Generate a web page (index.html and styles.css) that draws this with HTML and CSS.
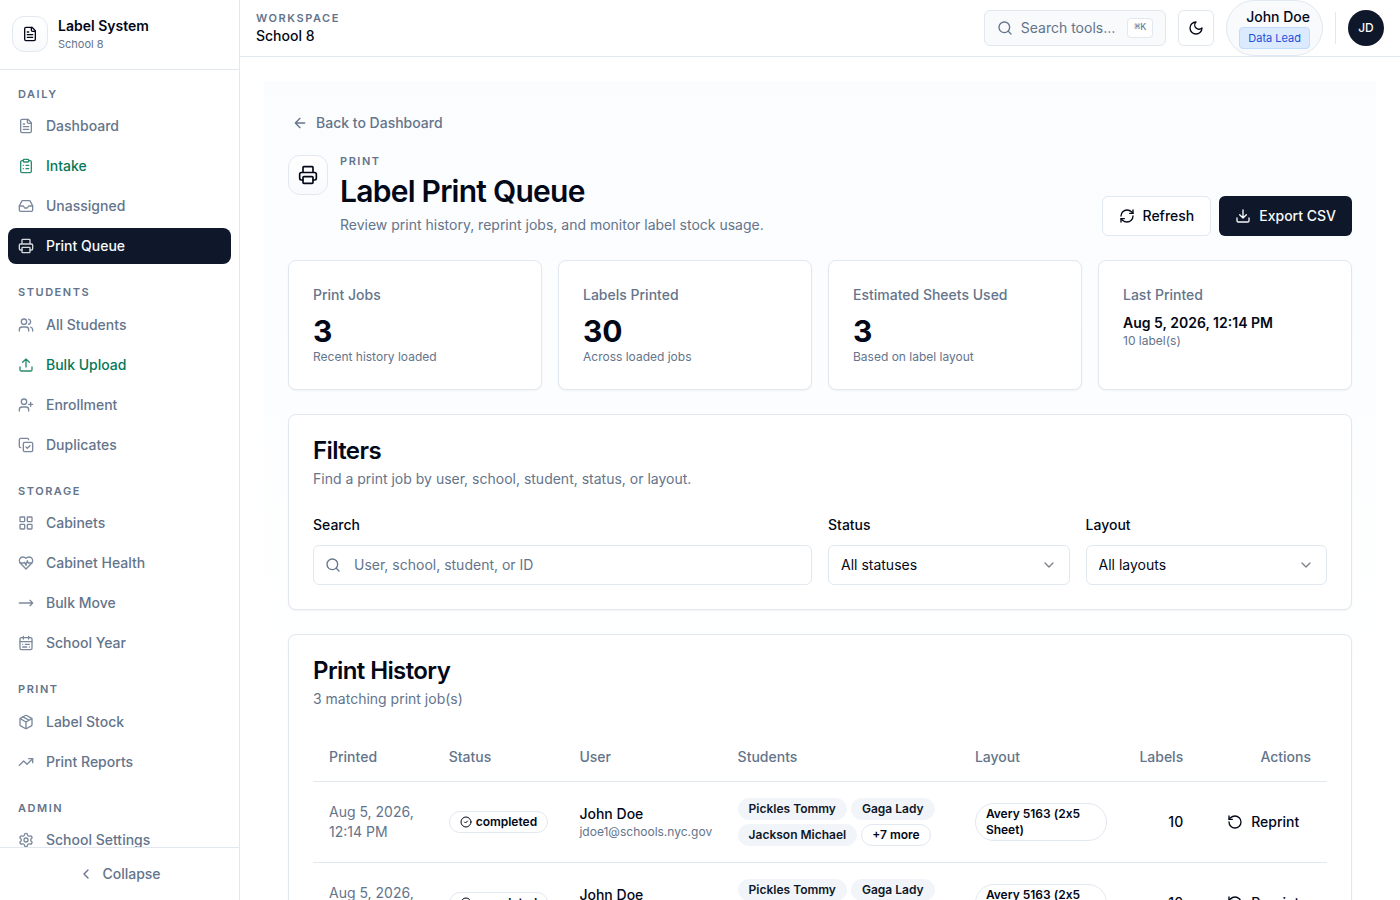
FILE: index.html
```html
<!DOCTYPE html>
<html lang="en">
<head>
<meta charset="utf-8">
<meta name="viewport" content="width=device-width, initial-scale=1">
<title>Label Print Queue</title>
<link rel="stylesheet" href="styles.css">
</head>
<body>
<svg class="sprite" aria-hidden="true">
  <symbol id="i-file" viewBox="0 0 24 24"><path d="M15 2H6a2 2 0 0 0-2 2v16a2 2 0 0 0 2 2h12a2 2 0 0 0 2-2V7Z"/><path d="M14 2v4a2 2 0 0 0 2 2h4M10 9H8M16 13H8M16 17H8"/></symbol>
  <symbol id="i-clipboard" viewBox="0 0 24 24"><rect width="8" height="4" x="8" y="2" rx="1"/><path d="M16 4h2a2 2 0 0 1 2 2v14a2 2 0 0 1-2 2H6a2 2 0 0 1-2-2V6a2 2 0 0 1 2-2h2M12 11h4M12 16h4M8 11h.01M8 16h.01"/></symbol>
  <symbol id="i-inbox" viewBox="0 0 24 24"><path d="M22 12h-6l-2 3h-4l-2-3H2"/><path d="M5.45 5.11 2 12v6a2 2 0 0 0 2 2h16a2 2 0 0 0 2-2v-6l-3.45-6.89A2 2 0 0 0 16.76 4H7.24a2 2 0 0 0-1.79 1.11z"/></symbol>
  <symbol id="i-printer" viewBox="0 0 24 24"><path d="M6 18H4a2 2 0 0 1-2-2v-5a2 2 0 0 1 2-2h16a2 2 0 0 1 2 2v5a2 2 0 0 1-2 2h-2M6 9V3a1 1 0 0 1 1-1h10a1 1 0 0 1 1 1v6"/><rect x="6" y="14" width="12" height="8" rx="1"/></symbol>
  <symbol id="i-users" viewBox="0 0 24 24"><path d="M16 21v-2a4 4 0 0 0-4-4H6a4 4 0 0 0-4 4v2"/><circle cx="9" cy="7" r="4"/><path d="M22 21v-2a4 4 0 0 0-3-3.87M16 3.13a4 4 0 0 1 0 7.75"/></symbol>
  <symbol id="i-upload" viewBox="0 0 24 24"><path d="M12 3v12M17 8l-5-5-5 5M21 15v4a2 2 0 0 1-2 2H5a2 2 0 0 1-2-2v-4"/></symbol>
  <symbol id="i-user-plus" viewBox="0 0 24 24"><path d="M16 21v-2a4 4 0 0 0-4-4H6a4 4 0 0 0-4 4v2"/><circle cx="9" cy="7" r="4"/><path d="M19 8v6M22 11h-6"/></symbol>
  <symbol id="i-copy-check" viewBox="0 0 24 24"><path d="m12 15 2 2 4-4"/><rect width="14" height="14" x="8" y="8" rx="2"/><path d="M4 16c-1.1 0-2-.9-2-2V4c0-1.1.9-2 2-2h10c1.1 0 2 .9 2 2"/></symbol>
  <symbol id="i-grid" viewBox="0 0 24 24"><rect width="7" height="7" x="3" y="3" rx="1"/><rect width="7" height="7" x="14" y="3" rx="1"/><rect width="7" height="7" x="14" y="14" rx="1"/><rect width="7" height="7" x="3" y="14" rx="1"/></symbol>
  <symbol id="i-heart" viewBox="0 0 24 24"><path d="M19 14c1.49-1.46 3-3.21 3-5.5A5.5 5.5 0 0 0 16.5 3c-1.76 0-3 .5-4.5 2-1.5-1.5-2.74-2-4.5-2A5.5 5.5 0 0 0 2 8.500c0 2.300 1.500 4.050 3 5.500l7 7Z"/><path d="M3.220 12H9.500l.5-1 2 4.500 2-7 1.500 3.500h5.270"/></symbol>
  <symbol id="i-move-right" viewBox="0 0 24 24"><path d="m18 8 4 4-4 4M2 12h20"/></symbol>
  <symbol id="i-calendar" viewBox="0 0 24 24"><rect width="18" height="18" x="3" y="4" rx="2"/><path d="M16 2v4M3 10h18M8 2v4M17 14h-6M13 18H7M7 14h.01M17 18h.01"/></symbol>
  <symbol id="i-package" viewBox="0 0 24 24"><path d="M11 21.730a2 2 0 0 0 2 0l7-4A2 2 0 0 0 21 16V8a2 2 0 0 0-1-1.730l-7-4a2 2 0 0 0-2 0l-7 4A2 2 0 0 0 3 8v8a2 2 0 0 0 1 1.730zM12 22V12"/><path d="M3.290 7 12 12l8.710-5M7.500 4.270l9 5.150"/></symbol>
  <symbol id="i-trend" viewBox="0 0 24 24"><path d="M22 7l-8.500 8.500-5-5L2 17"/><path d="M16 7h6v6"/></symbol>
  <symbol id="i-settings" viewBox="0 0 24 24"><path d="M9.671 4.136a2.340 2.340 0 0 1 4.659 0 2.340 2.340 0 0 0 3.319 1.915 2.340 2.340 0 0 1 2.330 4.033 2.340 2.340 0 0 0 0 3.831 2.340 2.340 0 0 1-2.330 4.033 2.340 2.340 0 0 0-3.319 1.915 2.340 2.340 0 0 1-4.659 0 2.340 2.340 0 0 0-3.320-1.915 2.340 2.340 0 0 1-2.330-4.033 2.340 2.340 0 0 0 0-3.831A2.340 2.340 0 0 1 6.350 6.051a2.340 2.340 0 0 0 3.319-1.915"/><circle cx="12" cy="12" r="3"/></symbol>
  <symbol id="i-chev-left" viewBox="0 0 24 24"><path d="m15 18-6-6 6-6"/></symbol>
  <symbol id="i-chev-down" viewBox="0 0 24 24"><path d="m6 9 6 6 6-6"/></symbol>
  <symbol id="i-search" viewBox="0 0 24 24"><circle cx="11" cy="11" r="8"/><path d="m21 21-4.300-4.300"/></symbol>
  <symbol id="i-moon" viewBox="0 0 24 24"><path d="M12 3a6 6 0 0 0 9 9 9 9 0 1 1-9-9Z"/></symbol>
  <symbol id="i-arrow-left" viewBox="0 0 24 24"><path d="m12 19-7-7 7-7M19 12H5"/></symbol>
  <symbol id="i-refresh" viewBox="0 0 24 24"><path d="M3 12a9 9 0 0 1 9-9 9.750 9.750 0 0 1 6.740 2.740L21 8"/><path d="M21 3v5h-5M21 12a9 9 0 0 1-9 9 9.750 9.750 0 0 1-6.740-2.740L3 16"/><path d="M8 16H3v5"/></symbol>
  <symbol id="i-download" viewBox="0 0 24 24"><path d="M12 15V3M21 15v4a2 2 0 0 1-2 2H5a2 2 0 0 1-2-2v-4M7 10l5 5 5-5"/></symbol>
  <symbol id="i-check" viewBox="0 0 24 24"><circle cx="12" cy="12" r="10"/><path d="m9 12 2 2 4-4"/></symbol>
  <symbol id="i-undo" viewBox="0 0 24 24"><path d="M3 12a9 9 0 1 0 9-9 9.750 9.750 0 0 0-6.740 2.740L3 8"/><path d="M3 3v5h5"/></symbol>
</svg>

<div class="app">
  <aside class="sidebar">
    <div class="brand">
      <span class="brand-icon"><svg class="icon"><use href="#i-file"/></svg></span>
      <div>
        <div class="brand-name">Label System</div>
        <div class="brand-sub">School 8</div>
      </div>
    </div>
    <nav class="nav" aria-label="Main">
      <section class="nav-section">
        <h2 class="eyebrow nav-title">Daily</h2>
        <a class="nav-item" href="#"><svg class="icon"><use href="#i-file"/></svg>Dashboard</a>
        <a class="nav-item accent" href="#"><svg class="icon"><use href="#i-clipboard"/></svg>Intake</a>
        <a class="nav-item" href="#"><svg class="icon"><use href="#i-inbox"/></svg>Unassigned</a>
        <a class="nav-item active" href="#" aria-current="page"><svg class="icon"><use href="#i-printer"/></svg>Print Queue</a>
      </section>
      <section class="nav-section">
        <h2 class="eyebrow nav-title">Students</h2>
        <a class="nav-item" href="#"><svg class="icon"><use href="#i-users"/></svg>All Students</a>
        <a class="nav-item accent" href="#"><svg class="icon"><use href="#i-upload"/></svg>Bulk Upload</a>
        <a class="nav-item" href="#"><svg class="icon"><use href="#i-user-plus"/></svg>Enrollment</a>
        <a class="nav-item" href="#"><svg class="icon"><use href="#i-copy-check"/></svg>Duplicates</a>
      </section>
      <section class="nav-section">
        <h2 class="eyebrow nav-title">Storage</h2>
        <a class="nav-item" href="#"><svg class="icon"><use href="#i-grid"/></svg>Cabinets</a>
        <a class="nav-item" href="#"><svg class="icon"><use href="#i-heart"/></svg>Cabinet Health</a>
        <a class="nav-item" href="#"><svg class="icon"><use href="#i-move-right"/></svg>Bulk Move</a>
        <a class="nav-item" href="#"><svg class="icon"><use href="#i-calendar"/></svg>School Year</a>
      </section>
      <section class="nav-section">
        <h2 class="eyebrow nav-title">Print</h2>
        <a class="nav-item" href="#"><svg class="icon"><use href="#i-package"/></svg>Label Stock</a>
        <a class="nav-item" href="#"><svg class="icon"><use href="#i-trend"/></svg>Print Reports</a>
      </section>
      <section class="nav-section">
        <h2 class="eyebrow nav-title">Admin</h2>
        <a class="nav-item" href="#"><svg class="icon"><use href="#i-settings"/></svg>School Settings</a>
      </section>
    </nav>
    <div class="sidebar-foot">
      <button class="collapse" type="button"><svg class="icon"><use href="#i-chev-left"/></svg>Collapse</button>
    </div>
  </aside>

  <div class="column">
    <header class="topbar">
      <div class="workspace">
        <div class="eyebrow">Workspace</div>
        <div class="workspace-name">School 8</div>
      </div>
      <div class="tools">
        <button class="tool-search" type="button"><svg class="icon"><use href="#i-search"/></svg><span>Search tools…</span><kbd>⌘K</kbd></button>
        <button class="tool-theme" type="button" aria-label="Toggle theme"><svg class="icon"><use href="#i-moon"/></svg></button>
        <div class="user">
          <span class="user-name">John Doe</span>
          <span class="role">Data Lead</span>
        </div>
        <span class="divider"></span>
        <button class="avatar" type="button">JD</button>
      </div>
    </header>

    <main class="main">
      <div class="page">
        <a class="back" href="#"><svg class="icon"><use href="#i-arrow-left"/></svg>Back to Dashboard</a>
        <div class="page-head">
          <span class="page-icon"><svg class="icon icon-lg"><use href="#i-printer"/></svg></span>
          <div class="page-titles">
            <div class="eyebrow">Print</div>
            <h1>Label Print Queue</h1>
            <p>Review print history, reprint jobs, and monitor label stock usage.</p>
          </div>
          <div class="actions">
            <button class="btn" type="button"><svg class="icon"><use href="#i-refresh"/></svg>Refresh</button>
            <button class="btn primary" type="button"><svg class="icon"><use href="#i-download"/></svg>Export CSV</button>
          </div>
        </div>

        <div class="stats">
          <div class="card stat"><div class="stat-label">Print Jobs</div><div class="stat-value">3</div><div class="small">Recent history loaded</div></div>
          <div class="card stat"><div class="stat-label">Labels Printed</div><div class="stat-value">30</div><div class="small">Across loaded jobs</div></div>
          <div class="card stat"><div class="stat-label">Estimated Sheets Used</div><div class="stat-value">3</div><div class="small">Based on label layout</div></div>
          <div class="card stat"><div class="stat-label">Last Printed</div><div class="stat-date">Aug 5, 2026, 12:14 PM</div><div class="small">10 label(s)</div></div>
        </div>

        <section class="card panel">
          <h2>Filters</h2>
          <p class="panel-desc">Find a print job by user, school, student, status, or layout.</p>
          <div class="filters">
            <div class="field wide">
              <label for="q">Search</label>
              <div class="control"><svg class="icon lead"><use href="#i-search"/></svg><input id="q" type="text" placeholder="User, school, student, or ID"></div>
            </div>
            <div class="field">
              <label for="status">Status</label>
              <div class="control"><select id="status"><option>All statuses</option></select><svg class="icon trail"><use href="#i-chev-down"/></svg></div>
            </div>
            <div class="field">
              <label for="layout">Layout</label>
              <div class="control"><select id="layout"><option>All layouts</option></select><svg class="icon trail"><use href="#i-chev-down"/></svg></div>
            </div>
          </div>
        </section>

        <section class="card panel">
          <h2>Print History</h2>
          <p class="panel-desc">3 matching print job(s)</p>
          <table>
            <thead>
              <tr><th class="c-printed">Printed</th><th class="c-status">Status</th><th class="c-user">User</th><th class="c-students">Students</th><th class="c-layout">Layout</th><th class="c-labels">Labels</th><th class="c-actions">Actions</th></tr>
            </thead>
            <tbody>
              <tr>
                <td class="muted">Aug 5, 2026, 12:14 PM</td>
                <td><span class="badge"><svg class="icon icon-sm"><use href="#i-check"/></svg>completed</span></td>
                <td><div class="name">John Doe</div><div class="small">jdoe1@schools.nyc.gov</div></td>
                <td><div class="badges"><span class="badge soft">Pickles Tommy</span><span class="badge soft">Gaga Lady</span><span class="badge soft">Jackson Michael</span><span class="badge">+7 more</span></div></td>
                <td><span class="badge layout">Avery 5163 (2x5 Sheet)</span></td>
                <td class="num">10</td>
                <td class="act"><button class="reprint" type="button"><svg class="icon"><use href="#i-undo"/></svg>Reprint</button></td>
              </tr>
              <tr>
                <td class="muted">Aug 5, 2026, 12:14 PM</td>
                <td><span class="badge"><svg class="icon icon-sm"><use href="#i-check"/></svg>completed</span></td>
                <td><div class="name">John Doe</div><div class="small">jdoe1@schools.nyc.gov</div></td>
                <td><div class="badges"><span class="badge soft">Pickles Tommy</span><span class="badge soft">Gaga Lady</span><span class="badge soft">Jackson Michael</span><span class="badge">+7 more</span></div></td>
                <td><span class="badge layout">Avery 5163 (2x5 Sheet)</span></td>
                <td class="num">10</td>
                <td class="act"><button class="reprint" type="button"><svg class="icon"><use href="#i-undo"/></svg>Reprint</button></td>
              </tr>
            </tbody>
          </table>
        </section>
      </div>
    </main>
  </div>
</div>
</body>
</html>
```
FILE: styles.css
```css
:root {
  --fg: #020817;
  --muted: #64748b;
  --border: #e2e8f0;
  --primary: #0f172a;
  --soft: #f1f5f9;
}
* { box-sizing: border-box; }
body {
  margin: 0;
  font-family: Inter, "Liberation Sans", sans-serif;
  font-size: 14px;
  line-height: 20px;
  color: var(--fg);
  background: #fff;
}
h1, h2, p { margin: 0; }
a { color: inherit; text-decoration: none; }
button, input, select { font: inherit; color: inherit; margin: 0; }
button { cursor: pointer; border: 0; background: none; padding: 0; }
.sprite { display: none; }
.icon {
  width: 16px;
  height: 16px;
  flex: none;
  fill: none;
  stroke: currentColor;
  stroke-width: 2;
  stroke-linecap: round;
  stroke-linejoin: round;
}
.icon-lg { width: 20px; height: 20px; }
.icon-sm { width: 12px; height: 12px; }
.eyebrow {
  font-size: 11px;
  line-height: 1.5;
  font-weight: 600;
  letter-spacing: 0.14em;
  text-transform: uppercase;
  color: var(--muted);
}
.small { font-size: 12px; line-height: 16px; color: var(--muted); }

.app { display: flex; height: 100vh; }

/* Sidebar */
.sidebar {
  width: 240px;
  flex: none;
  display: flex;
  flex-direction: column;
  border-right: 1px solid var(--border);
}
.brand {
  display: flex;
  align-items: center;
  gap: 10px;
  padding: 16px 12px;
  border-bottom: 1px solid var(--border);
}
.brand-icon, .page-icon {
  display: flex;
  align-items: center;
  justify-content: center;
  flex: none;
  border: 1px solid var(--border);
  border-radius: 12px;
  background: linear-gradient(#fff, #f8fafc);
}
.brand-icon { width: 36px; height: 36px; }
.brand-name { font-weight: 600; line-height: 20px; }
.brand-sub { font-size: 11px; line-height: 1.5; color: var(--muted); }
.nav {
  flex: 1;
  min-height: 0;
  overflow-y: auto;
  scrollbar-width: none;
  padding: 16px 8px;
  display: flex;
  flex-direction: column;
  gap: 20px;
}
.nav-section { flex: none; display: flex; flex-direction: column; gap: 4px; }
.nav-title { padding: 0 10px 2px; }
.nav-item {
  display: flex;
  align-items: center;
  gap: 12px;
  height: 36px;
  padding: 0 10px;
  border-radius: 8px;
  font-weight: 500;
  color: var(--muted);
}
.nav-item .icon { opacity: 0.85; }
.nav-item.accent { color: #047857; }
.nav-item.active { background: var(--primary); color: #f8fafc; }
.sidebar-foot { border-top: 1px solid var(--border); padding: 8px; }
.collapse {
  display: flex;
  align-items: center;
  justify-content: center;
  gap: 8px;
  width: 100%;
  height: 36px;
  font-weight: 500;
  color: var(--muted);
}

/* Top bar */
.column { flex: 1; min-width: 0; display: flex; flex-direction: column; }
.topbar {
  flex: none;
  display: flex;
  align-items: center;
  justify-content: space-between;
  padding: 0 16px;
  border-bottom: 1px solid var(--border);
}
.workspace-name { font-weight: 500; }
.tools { display: flex; align-items: center; gap: 12px; }
.tool-search {
  display: flex;
  align-items: center;
  gap: 8px;
  height: 36px;
  padding: 0 12px;
  border: 1px solid var(--border);
  border-radius: 6px;
  background: #f8fafc;
  color: var(--muted);
}
kbd {
  margin-left: 4px;
  padding: 0 6px;
  border: 1px solid var(--border);
  border-radius: 4px;
  background: #fff;
  font: 500 10px/18px "Liberation Mono", "DejaVu Sans Mono", monospace;
}
.tool-theme {
  display: flex;
  align-items: center;
  justify-content: center;
  width: 36px;
  height: 36px;
  border: 1px solid var(--border);
  border-radius: 6px;
}
.user {
  display: flex;
  flex-direction: column;
  align-items: flex-end;
  padding: 6px 12px;
  border: 1px solid var(--border);
  border-radius: 28px;
  background: #f8fafc;
}
.user-name { font-weight: 500; }
.role {
  padding: 2px 8px;
  border: 1px solid #bfdbfe;
  border-radius: 4px;
  background: #dbeafe;
  color: #1d4ed8;
  font-size: 11px;
  line-height: 16px;
}
.divider { width: 1px; height: 32px; background: var(--border); }
.avatar {
  width: 36px;
  height: 36px;
  border-radius: 50%;
  background: var(--primary);
  color: #f8fafc;
  font-size: 12px;
  font-weight: 500;
}

/* Page */
.main { flex: 1; min-height: 0; overflow: hidden; padding: 24px; }
.page {
  display: flex;
  flex-direction: column;
  gap: 24px;
  padding: 24px;
  background: linear-gradient(#fafcfe, #fff 640px);
}
.back {
  display: flex;
  align-items: center;
  align-self: flex-start;
  gap: 8px;
  height: 36px;
  padding: 0 4px;
  margin-bottom: -12px;
  font-weight: 500;
  color: var(--muted);
}
.page-head { display: flex; align-items: flex-start; gap: 12px; }
.page-icon { width: 40px; height: 40px; margin-top: 2px; }
.page-titles { flex: 1; min-width: 0; padding-bottom: 1px; }
.page-titles h1 {
  margin: 3px 0 6px;
  font-size: 30px;
  line-height: 36px;
  font-weight: 600;
  letter-spacing: -0.025em;
}
.page-titles p { color: var(--muted); }
.actions { display: flex; gap: 8px; align-self: flex-end; }
.btn {
  display: flex;
  align-items: center;
  gap: 8px;
  height: 40px;
  padding: 0 16px;
  border: 1px solid var(--border);
  border-radius: 6px;
  background: #fff;
  font-weight: 500;
}
.btn.primary { background: var(--primary); border: 0; color: #f8fafc; }

.card {
  border: 1px solid var(--border);
  border-radius: 8px;
  background: #fff;
  box-shadow: 0 1px 2px rgba(0, 0, 0, 0.05);
}
.stats { display: grid; grid-template-columns: repeat(4, 1fr); gap: 16px; }
.stat { padding: 24px; }
.stat-label { margin-bottom: 8px; font-weight: 500; color: var(--muted); }
.stat-value { font-size: 30px; line-height: 36px; font-weight: 700; }
.stat-date { font-weight: 600; }

.panel { padding: 24px; }
.panel h2 {
  font-size: 24px;
  line-height: 24px;
  font-weight: 600;
  letter-spacing: -0.025em;
}
.panel-desc { margin: 6px 0 24px; color: var(--muted); }
.filters { display: grid; grid-template-columns: repeat(4, 1fr); gap: 16px; }
.wide { grid-column: span 2; }
.field label { display: block; margin-bottom: 8px; line-height: 24px; font-weight: 500; }
.control { position: relative; }
.control input, .control select {
  display: block;
  width: 100%;
  height: 40px;
  padding: 0 12px;
  border: 1px solid var(--border);
  border-radius: 6px;
  background: #fff;
  appearance: none;
}
.control input { padding-left: 40px; }
.control input::placeholder { color: var(--muted); opacity: 1; }
.lead, .trail { position: absolute; top: 12px; color: var(--muted); pointer-events: none; }
.lead { left: 12px; }
.trail { right: 13px; color: var(--fg); opacity: 0.5; }

table { width: 100%; table-layout: fixed; border-collapse: separate; border-spacing: 0; }
th, td { border-bottom: 1px solid var(--border); }
th {
  height: 49px;
  padding: 0 16px;
  text-align: left;
  font-weight: 500;
  color: var(--muted);
}
td { padding: 16px; }
.c-printed { width: 11.8%; }
.c-status { width: 12.9%; }
.c-user { width: 15.6%; }
.c-students { width: 23.4%; }
.c-layout { width: 16.2%; }
.c-labels { width: 7.5%; }
.c-actions { width: 12.6%; }
.c-labels, .c-actions, .num { text-align: right; }
.muted { color: var(--muted); }
.name, .num { font-weight: 500; }
.badges { display: flex; flex-wrap: wrap; gap: 4px; }
.badge {
  display: inline-flex;
  align-items: center;
  gap: 4px;
  padding: 2px 10px;
  border: 1px solid var(--border);
  border-radius: 20px;
  font-size: 12px;
  line-height: 16px;
  font-weight: 600;
}
.badge.soft { background: var(--soft); border-color: var(--soft); color: var(--primary); }
.badge.layout { display: flex; font-variant-ligatures: no-contextual; }
td.act { padding: 0 16px; text-align: right; }
.reprint {
  display: inline-flex;
  align-items: center;
  gap: 8px;
  height: 36px;
  padding: 0 12px;
  font-weight: 500;
}
```
